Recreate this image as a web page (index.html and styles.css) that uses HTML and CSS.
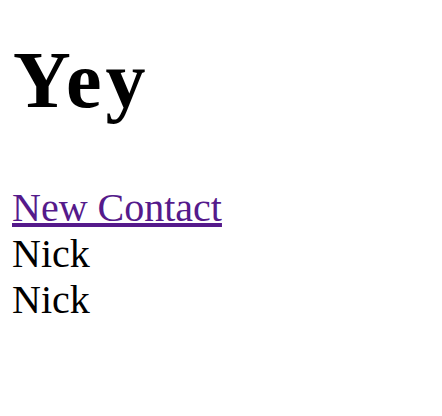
FILE: index.html
```html
<!DOCTYPE html>
<html>
<head>
<meta charset="utf-8">
<link rel="stylesheet" href="styles.css">
</head>
<body>
<div class="page">
  <h1 class="title">Yey</h1>
  <a class="link" href="#">New Contact</a>
  <div class="item">Nick</div>
  <div class="item">Nick</div>
</div>
</body>
</html>
```
FILE: styles.css
```css
html, body {
  margin: 0;
  padding: 0;
  background: #fff;
}
.page {
  padding: 34px 12px;
  font-family: "Liberation Serif", "Times New Roman", serif;
  font-size: 40px;
  color: #000;
}
.title {
  font-size: 80px;
  font-weight: bold;
  margin: 0 0 58px 0;
  line-height: 92px;
  letter-spacing: 4px;
  padding-left: 1px;
}
.link {
  color: #551a8b;
  text-decoration: underline;
  line-height: 46px;
}
.item {
  line-height: 46px;
}
```
